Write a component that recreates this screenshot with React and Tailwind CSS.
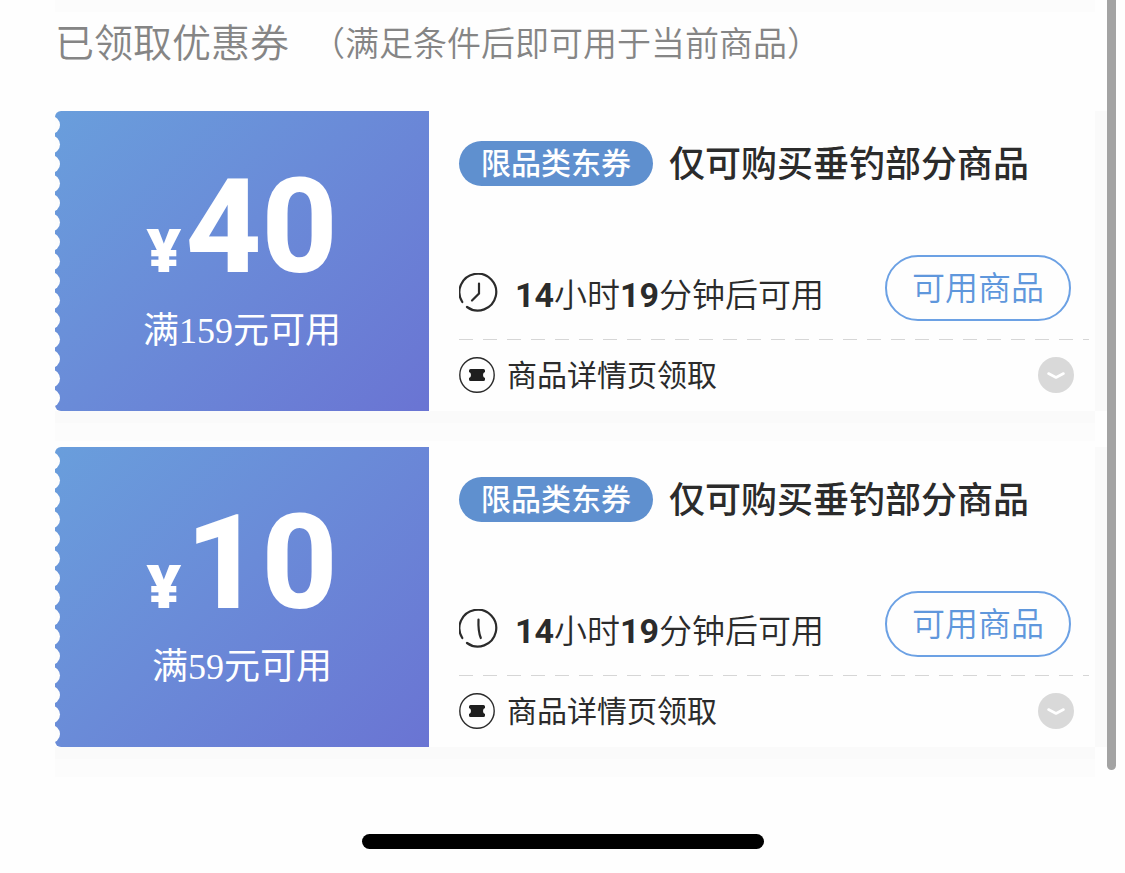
const coupons = [
  { id: 'c40', amount: 40, minimum: 159, hands: 'M20 10.5v10l-7 7' },
  { id: 'c10', amount: 10, minimum: 59, hands: 'M19.5 10.5c-.3 7 0 13 2.3 18.500' },
];

const notches = Array.from({ length: 15 }, (_, i) => 14 + i * 19.5);

function StampEdge() {
  return (
    <svg className="absolute left-0 top-0" width="10" height="300" viewBox="0 0 10 300" aria-hidden="true">
      {notches.map((y) => (
        <circle key={y} cx="-4" cy={y} r="9" fill="#fdfdfd" />
      ))}
    </svg>
  );
}

function ClockIcon({ hands }) {
  return (
    <svg className="shrink-0" width="40" height="40" viewBox="0 0 40 40" fill="none" stroke="#2b2b2b" strokeWidth="2.200" strokeLinecap="round" aria-hidden="true">
      <path d="M3.300 29A18.400 18.400 0 1 1 8 34" />
      <path d={hands} />
    </svg>
  );
}

function TicketIcon() {
  return (
    <svg className="shrink-0" width="36" height="36" viewBox="0 0 36 36" aria-hidden="true">
      <circle cx="18" cy="18" r="17.200" fill="none" stroke="#2b2b2b" strokeWidth="1.400" />
      <path d="M11.500 12h13q1.500 0 1.500 1.500v1.500q-2 .6-2 3t2 3v1.500q0 1.500-1.500 1.500h-13q-1.500 0-1.500-1.500v-1.500q2-.6 2-3t-2-3v-1.500q0-1.500 1.500-1.500z" fill="#1f1f1f" />
    </svg>
  );
}

function Coupon({ amount, minimum, hands }) {
  return (
    <li>
      <article className="flex h-[300px]">
        <div className="relative flex w-[374px] shrink-0 flex-col items-center overflow-hidden rounded-l-md bg-linear-135 from-[#699edc] to-[#6a74d3] pt-[50px] text-white">
          <StampEdge />
          <p className="flex h-[132px] items-baseline gap-1 font-[Roboto,sans-serif] leading-[132px] font-bold">
            <span className="font-['Open_Sans',sans-serif] text-[60px] font-extrabold">¥</span>
            <span className="font-extrabold text-[132px]">{amount}</span>
          </p>
          <p className="mt-3 text-[36px] leading-[52px] font-[Liberation_Serif,Noto_Sans_CJK_SC,sans-serif]">
            满{minimum}元可用
          </p>
        </div>
        <div className="flex min-w-0 flex-1 flex-col pt-[30px] pl-[30px]">
          <div className="flex h-[45px] items-center gap-4 whitespace-nowrap">
            <span className="h-[45px] rounded-full bg-[#5f90cf] px-[22px] text-[30px] leading-[41px] font-medium text-white">
              限品类东券
            </span>
            <h2 className="h-[45px] text-[36px] leading-[40px] font-medium text-[#2b2b2b]">仅可购买垂钓部分商品</h2>
          </div>
          <div className="mt-[69px] flex h-[66px] items-center justify-between pr-6 whitespace-nowrap">
            <p className="flex items-center gap-4 pt-[10px] text-[33px] leading-[50px] text-[#2b2b2b]">
              <ClockIcon hands={hands} />
              <span className="pt-[2px] font-[350]">
                <b className="font-[Roboto,sans-serif] text-[34px] font-bold">14</b>小时
                <b className="font-[Roboto,sans-serif] text-[34px] font-bold">19</b>分钟后可用
              </span>
            </p>
            <button type="button" className="h-[66px] rounded-full border-2 border-[#6ca1e4] px-[25px] pb-1 text-[33px] leading-[56px] font-[350] text-[#5f97dc]">
              可用商品
            </button>
          </div>
          <div className="mt-[18px] mr-[6px] h-px bg-[repeating-linear-gradient(90deg,#d6d6d6_0_14px,transparent_14px_24px)]" />
          <div className="flex flex-1 items-center justify-between pr-[21px] pb-[2px]">
            <p className="flex items-center gap-3 text-[30px] leading-[40px] text-[#2b2b2b]">
              <TicketIcon />
              <span className="pb-1 font-normal">商品详情页领取</span>
            </p>
            <button type="button" aria-label="展开详情" className="size-9 rounded-full bg-[#d9d9d9]">
              <svg width="36" height="36" viewBox="0 0 36 36" fill="none" stroke="#fff" strokeWidth="2.600" strokeLinecap="round" strokeLinejoin="round" aria-hidden="true">
                <path d="M10.500 16.500l7.500 4 7.500-4" />
              </svg>
            </button>
          </div>
        </div>
        <div className="-mr-3 w-3 bg-[#fafafa]" />
      </article>
      <div className="h-3 bg-[#fafafa]" />
      <div className="h-[18px] bg-[#fcfcfc]" />
      <div className="h-[6px]" />
    </li>
  );
}

export default function App() {
  return (
    <div className="relative min-h-screen bg-[#fefefe] font-[Noto_Sans_CJK_SC,sans-serif]">
      <main className="pr-[30px] pl-[55px]">
        <div className="h-3 bg-[#fcfcfc]" />
        <h1 className="flex h-[99px] items-start gap-[22px] leading-[56px] font-[350] whitespace-nowrap text-[#858585]">
          <span className="text-[39px]">已领取优惠券</span>
          <span className="text-[34px] leading-[60px]">（满足条件后即可用于当前商品）</span>
        </h1>
        <ul>
          {coupons.map((coupon) => (
            <Coupon key={coupon.id} {...coupon} />
          ))}
        </ul>
      </main>
      <div className="absolute top-0 right-[9px] h-[770px] w-[9px] rounded-b-full bg-[#a3a3a3]" />
      <div className="mx-auto mt-[51px] h-[15px] w-[402px] rounded-full bg-black" />
    </div>
  );
}
